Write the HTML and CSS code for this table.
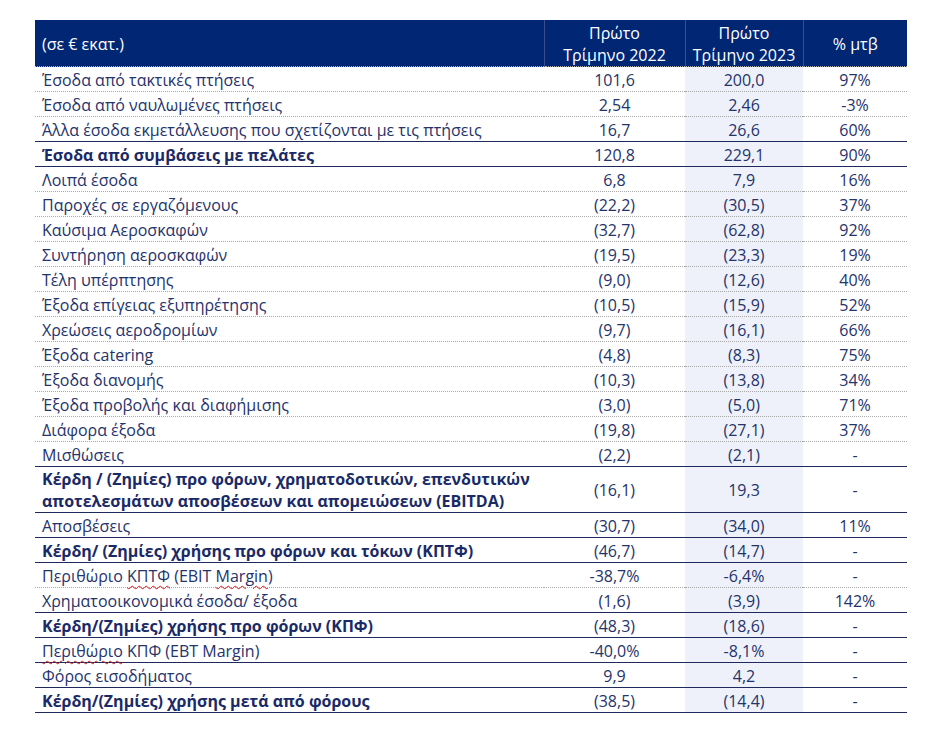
FILE: index.html
```html
<!DOCTYPE html>
<html lang="el">
<head>
<meta charset="utf-8">
<link rel="stylesheet" href="styles.css">
</head>
<body>
<table class="fin">
  <colgroup>
    <col class="c-label"><col class="c-num"><col class="c-hl"><col class="c-pct">
  </colgroup>
  <thead>
    <tr>
      <th class="lbl">(σε € εκατ.)</th>
      <th>Πρώτο<br>Τρίμηνο 2022</th>
      <th>Πρώτο<br>Τρίμηνο 2023</th>
      <th>% μτβ</th>
    </tr>
  </thead>
  <tbody>
    <tr class="dot"><td>Έσοδα από τακτικές πτήσεις</td><td>101,6</td><td class="hl">200,0</td><td>97%</td></tr>
    <tr class="dot"><td>Έσοδα από ναυλωμένες πτήσεις</td><td>2,54</td><td class="hl">2,46</td><td>-3%</td></tr>
    <tr class="solid"><td>Άλλα έσοδα εκμετάλλευσης που σχετίζονται με τις πτήσεις</td><td>16,7</td><td class="hl">26,6</td><td>60%</td></tr>
    <tr class="solid bold"><td>Έσοδα από συμβάσεις με πελάτες</td><td>120,8</td><td class="hl">229,1</td><td>90%</td></tr>
    <tr class="dot"><td>Λοιπά έσοδα</td><td>6,8</td><td class="hl">7,9</td><td>16%</td></tr>
    <tr class="dot"><td>Παροχές σε εργαζόμενους</td><td>(22,2)</td><td class="hl">(30,5)</td><td>37%</td></tr>
    <tr class="dot"><td>Καύσιμα Αεροσκαφών</td><td>(32,7)</td><td class="hl">(62,8)</td><td>92%</td></tr>
    <tr class="dot"><td>Συντήρηση αεροσκαφών</td><td>(19,5)</td><td class="hl">(23,3)</td><td>19%</td></tr>
    <tr class="dot"><td>Τέλη υπέρπτησης</td><td>(9,0)</td><td class="hl">(12,6)</td><td>40%</td></tr>
    <tr class="dot"><td>Έξοδα επίγειας εξυπηρέτησης</td><td>(10,5)</td><td class="hl">(15,9)</td><td>52%</td></tr>
    <tr class="dot"><td>Χρεώσεις αεροδρομίων</td><td>(9,7)</td><td class="hl">(16,1)</td><td>66%</td></tr>
    <tr class="dot"><td>Έξοδα catering</td><td>(4,8)</td><td class="hl">(8,3)</td><td>75%</td></tr>
    <tr class="dot"><td>Έξοδα διανομής</td><td>(10,3)</td><td class="hl">(13,8)</td><td>34%</td></tr>
    <tr class="dot"><td>Έξοδα προβολής και διαφήμισης</td><td>(3,0)</td><td class="hl">(5,0)</td><td>71%</td></tr>
    <tr class="dot"><td>Διάφορα έξοδα</td><td>(19,8)</td><td class="hl">(27,1)</td><td>37%</td></tr>
    <tr class="solid"><td>Μισθώσεις</td><td>(2,2)</td><td class="hl">(2,1)</td><td>-</td></tr>
    <tr class="solid bold two"><td>Κέρδη / (Ζημίες) προ φόρων, χρηματοδοτικών, επενδυτικών<br>αποτελεσμάτων αποσβέσεων και απομειώσεων (EBITDA)</td><td>(16,1)</td><td class="hl">19,3</td><td>-</td></tr>
    <tr class="solid"><td>Αποσβέσεις</td><td>(30,7)</td><td class="hl">(34,0)</td><td>11%</td></tr>
    <tr class="solid bold"><td>Κέρδη/ (Ζημίες) χρήσης προ φόρων και τόκων (ΚΠΤΦ)</td><td>(46,7)</td><td class="hl">(14,7)</td><td>-</td></tr>
    <tr class="dot"><td>Περιθώριο <span class="sp">ΚΠΤΦ</span> (EBIT <span class="sp">Margin</span>)</td><td>-38,7%</td><td class="hl">-6,4%</td><td>-</td></tr>
    <tr class="solid"><td>Χρηματοοικονομικά έσοδα/ έξοδα</td><td>(1,6)</td><td class="hl">(3,9)</td><td>142%</td></tr>
    <tr class="solid bold"><td>Κέρδη/(Ζημίες) χρήσης προ φόρων (ΚΠΦ)</td><td>(48,3)</td><td class="hl">(18,6)</td><td>-</td></tr>
    <tr class="solid"><td><span class="sp">Περιθώριο</span> ΚΠΦ (EBT Margin)</td><td>-40,0%</td><td class="hl">-8,1%</td><td>-</td></tr>
    <tr class="solid"><td>Φόρος εισοδήματος</td><td>9,9</td><td class="hl">4,2</td><td>-</td></tr>
    <tr class="solid bold"><td>Κέρδη/(Ζημίες) χρήσης μετά από φόρους</td><td>(38,5)</td><td class="hl">(14,4)</td><td>-</td></tr>
  </tbody>
</table>
</body>
</html>
```

FILE: styles.css
```css
html, body {
  margin: 0;
  padding: 0;
  background: #ffffff;
}

body {
  padding: 20px 0 0 35px;
  font-family: "Open Sans", "DejaVu Sans", sans-serif;
  color: #25336b;
}

.fin {
  border-collapse: collapse;
  table-layout: fixed;
  width: 872px;
  font-size: 16px;
}

.c-label { width: 509px; }
.c-num { width: 141px; }
.c-hl { width: 118px; }
.c-pct { width: 104px; }

.fin thead th {
  background: #002674;
  color: #ffffff;
  font-weight: normal;
  height: 44px;
  padding: 2px 4px 0;
  line-height: 22px;
  text-align: center;
  vertical-align: middle;
  border-left: 1px solid #3a4f8f;
  border-bottom: 1px dotted #b0b0b0;
}

.fin thead th.lbl {
  text-align: left;
  padding-left: 7px;
  border-left: none;
}

.fin td {
  height: 22px;
  padding: 2px 4px 0;
  line-height: 20px;
  text-align: center;
  vertical-align: middle;
  white-space: nowrap;
}

.fin td:first-child {
  text-align: left;
  padding-left: 7px;
}

.fin td.hl {
  background: #eef1f9;
}

.fin tr.dot td {
  border-bottom: 1px dotted #a9a9a9;
}

.fin tr.solid td {
  border-bottom: 1.5px solid #1f2a5c;
}

.fin tr.bold td:first-child {
  font-weight: bold;
  color: #1a2a66;
}

.fin tr.two td {
  height: 44px;
  padding-top: 1px;
  line-height: 22px;
}

.sp {
  text-decoration: underline wavy #d42020;
  text-decoration-thickness: 1px;
  text-underline-offset: 3px;
}
```
